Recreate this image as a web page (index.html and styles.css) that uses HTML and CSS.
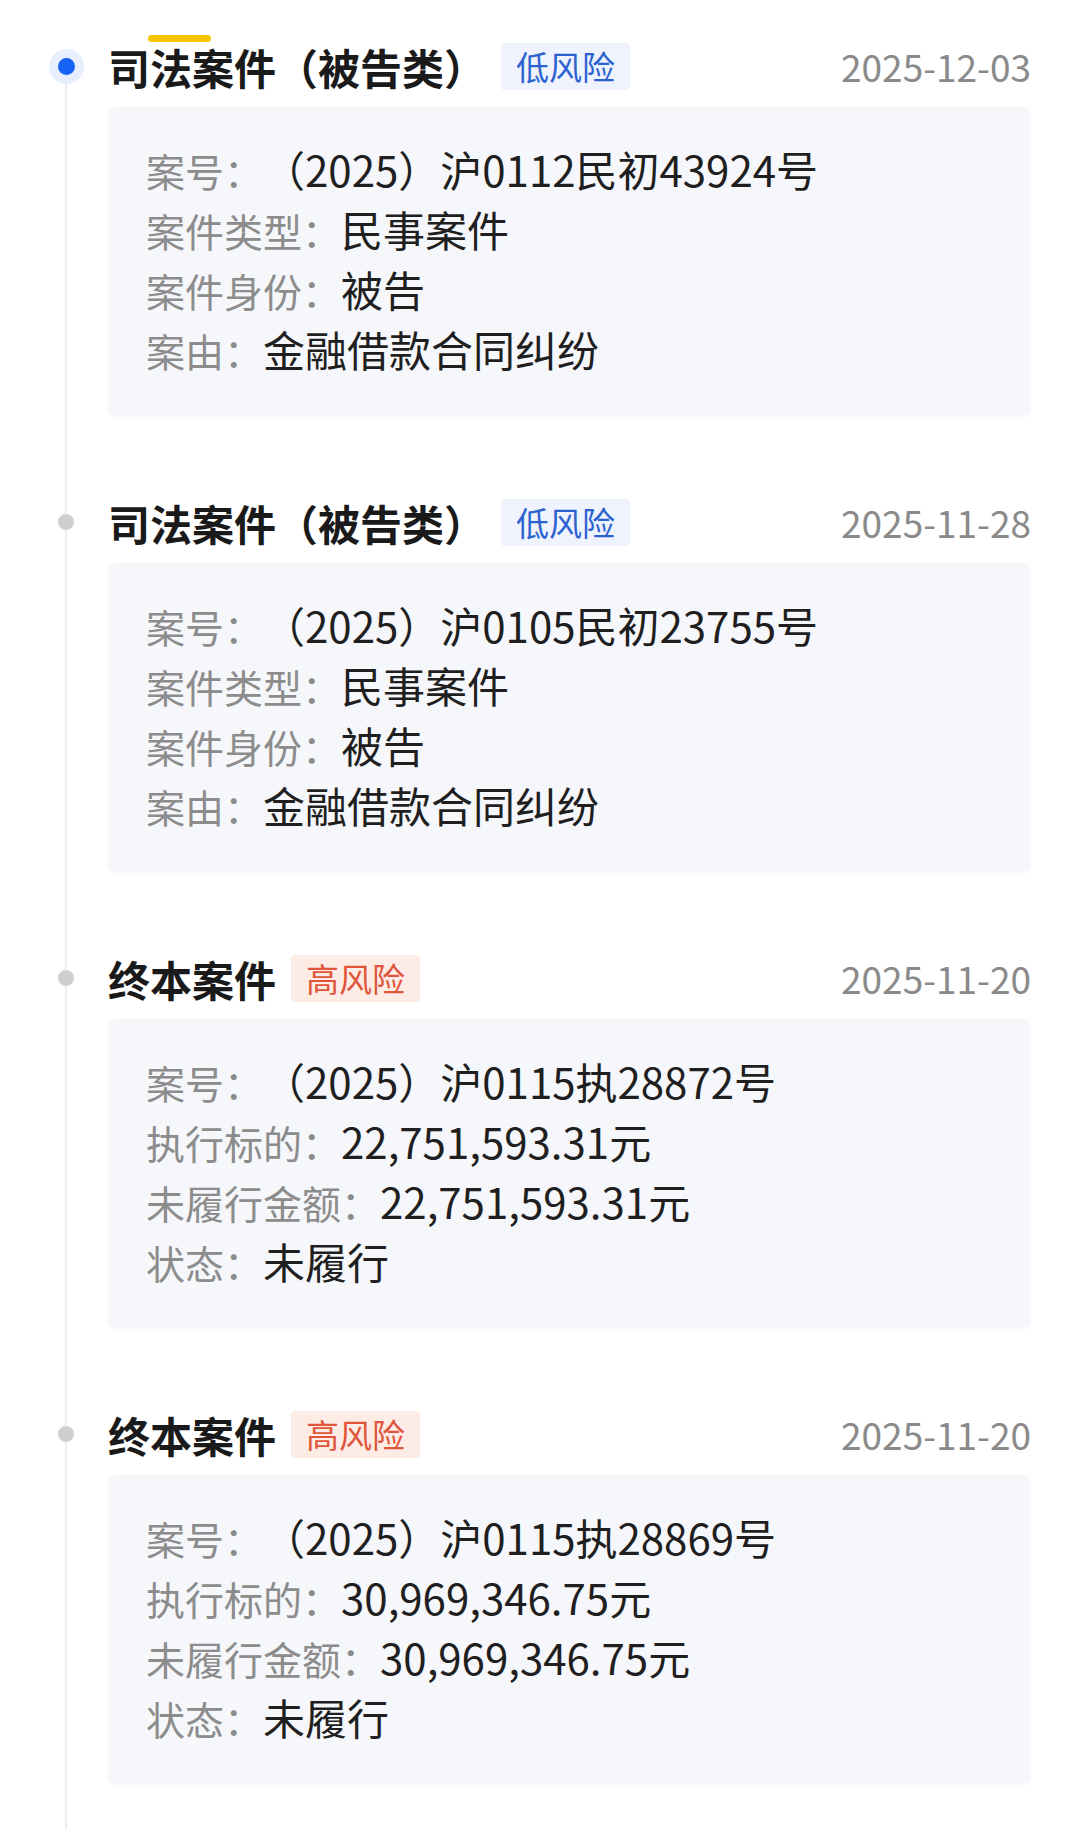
FILE: index.html
```html
<!DOCTYPE html>
<html lang="zh-CN">
<head>
    <meta charset="utf-8" />
    <meta name="viewport" content="width=device-width, initial-scale=1" />
    <title>风险动态</title>
    <link rel="stylesheet" href="styles.css">
</head>
<body>
    <div class="timeline">
        <span class="tab-mark"></span>

        <div class="entry">
            <div class="rail"><span class="dot dot-active"></span></div>
            <div class="entry-head">
                <span class="entry-title">司法案件（被告类）</span>
                <span class="badge badge-low">低风险</span>
                <span class="entry-date">2025-12-03</span>
            </div>
            <div class="card">
                <div class="row"><span class="label">案号：</span><span class="value">（2025）沪0112民初43924号</span></div>
                <div class="row"><span class="label">案件类型：</span><span class="value">民事案件</span></div>
                <div class="row"><span class="label">案件身份：</span><span class="value">被告</span></div>
                <div class="row"><span class="label">案由：</span><span class="value">金融借款合同纠纷</span></div>
            </div>
        </div>

        <div class="entry">
            <div class="rail"><span class="dot"></span></div>
            <div class="entry-head">
                <span class="entry-title">司法案件（被告类）</span>
                <span class="badge badge-low">低风险</span>
                <span class="entry-date">2025-11-28</span>
            </div>
            <div class="card">
                <div class="row"><span class="label">案号：</span><span class="value">（2025）沪0105民初23755号</span></div>
                <div class="row"><span class="label">案件类型：</span><span class="value">民事案件</span></div>
                <div class="row"><span class="label">案件身份：</span><span class="value">被告</span></div>
                <div class="row"><span class="label">案由：</span><span class="value">金融借款合同纠纷</span></div>
            </div>
        </div>

        <div class="entry">
            <div class="rail"><span class="dot"></span></div>
            <div class="entry-head">
                <span class="entry-title">终本案件</span>
                <span class="badge badge-high">高风险</span>
                <span class="entry-date">2025-11-20</span>
            </div>
            <div class="card">
                <div class="row"><span class="label">案号：</span><span class="value">（2025）沪0115执28872号</span></div>
                <div class="row"><span class="label">执行标的：</span><span class="value">22,751,593.31元</span></div>
                <div class="row"><span class="label">未履行金额：</span><span class="value">22,751,593.31元</span></div>
                <div class="row"><span class="label">状态：</span><span class="value">未履行</span></div>
            </div>
        </div>

        <div class="entry">
            <div class="rail"><span class="dot"></span></div>
            <div class="entry-head">
                <span class="entry-title">终本案件</span>
                <span class="badge badge-high">高风险</span>
                <span class="entry-date">2025-11-20</span>
            </div>
            <div class="card">
                <div class="row"><span class="label">案号：</span><span class="value">（2025）沪0115执28869号</span></div>
                <div class="row"><span class="label">执行标的：</span><span class="value">30,969,346.75元</span></div>
                <div class="row"><span class="label">未履行金额：</span><span class="value">30,969,346.75元</span></div>
                <div class="row"><span class="label">状态：</span><span class="value">未履行</span></div>
            </div>
        </div>
    </div>
</body>
</html>
```

FILE: styles.css
```css
body {
    font-family: "Noto Sans CJK SC", "Noto Sans", sans-serif;
    background-color: #fff;
    color: #1f1f1f;
    margin: 0;
    padding: 0;
}

.timeline {
    position: relative;
    padding: 42px 40px 0 0;
}

/* vertical rail line behind the dots */
.timeline::before {
    content: "";
    position: absolute;
    left: 65px;
    top: 64px;
    bottom: 0;
    width: 2px;
    background-color: #eeeeee;
}

/* little yellow tab marker over the first title */
.tab-mark {
    position: absolute;
    left: 148px;
    top: 35px;
    width: 63px;
    height: 7px;
    border-radius: 4px;
    background-color: #f6c700;
}

.entry {
    display: grid;
    grid-template-columns: 108px 1fr;
    grid-template-rows: 48px auto;
    row-gap: 17px;
    padding-bottom: 82px;
}

.rail {
    grid-column: 1;
    grid-row: 1;
    display: flex;
    align-items: center;
    padding-left: 58px;
}

.dot {
    position: relative;
    z-index: 1;
    width: 16px;
    height: 16px;
    border-radius: 50%;
    background-color: #cfcfcf;
}

.dot-active {
    width: 17px;
    height: 17px;
    margin-left: -0.5px;
    background-color: #1662f5;
    box-shadow: 0 0 0 9px #e7eefe;
}

.entry-head {
    grid-column: 2;
    grid-row: 1;
    display: flex;
    align-items: center;
    gap: 15px;
}

.entry-title {
    font-size: 42px;
    font-weight: 700;
    color: #1a1a1a;
    white-space: nowrap;
}

.badge {
    display: inline-flex;
    align-items: center;
    height: 47px;
    padding: 0 15px;
    border-radius: 4px;
    font-size: 33px;
    white-space: nowrap;
}

.badge-low {
    background-color: #eef3fd;
    color: #2c62cf;
}

.badge-high {
    background-color: #fdebe5;
    color: #e0563a;
}

.entry-date {
    margin-left: auto;
    font-size: 37px;
    color: #8a8a8a;
    white-space: nowrap;
}

.card {
    grid-column: 2;
    grid-row: 2;
    background-color: #f6f7fb;
    border-radius: 8px;
    padding: 32px 38px 37px;
    box-shadow: 0 1px 3px rgba(0, 0, 0, 0.03);
}

.row {
    display: flex;
    align-items: baseline;
    height: 60px;
    line-height: 60px;
    white-space: nowrap;
}

.label {
    font-size: 39px;
    color: #8c8c8c;
}

.value {
    font-size: 42px;
    color: #1f1f1f;
}
```
